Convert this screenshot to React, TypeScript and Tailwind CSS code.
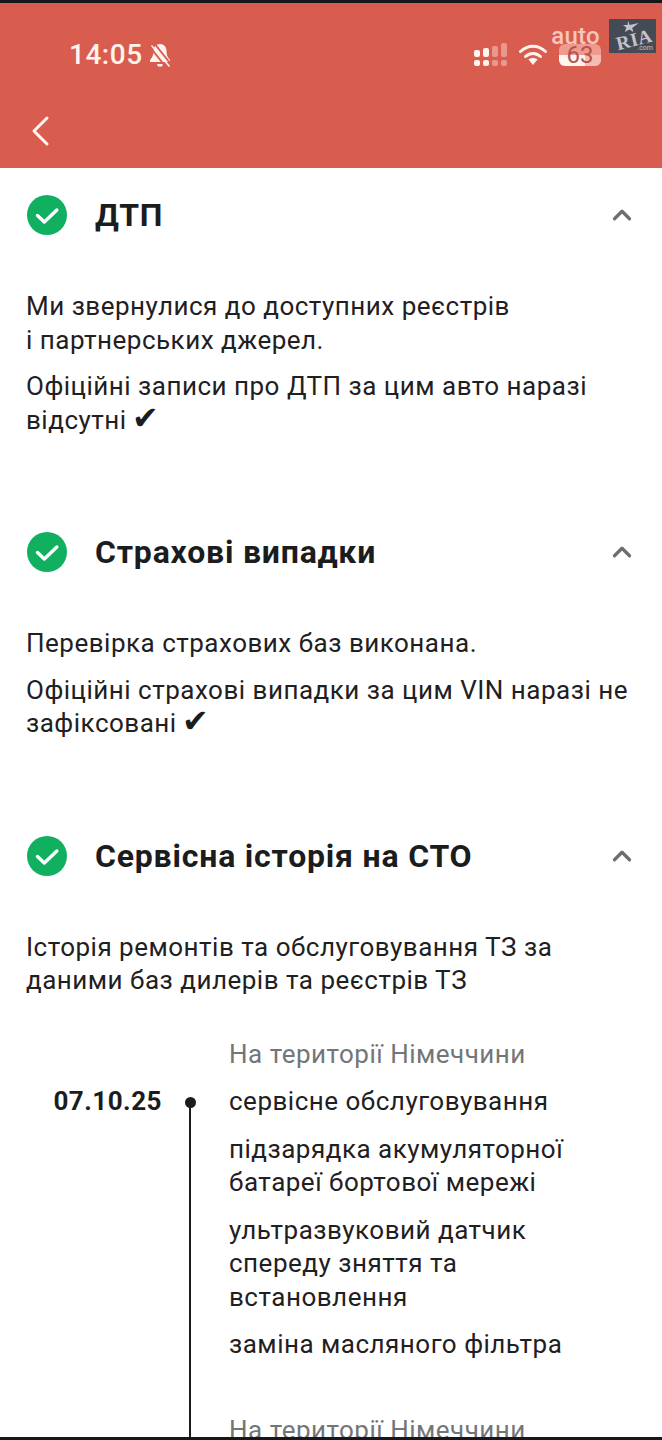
import type { ReactNode } from "react";
import { ChevronUp } from "lucide-react";

function CheckBadge() {
  return (
    <svg width="42" height="42" viewBox="0 0 42 42" className="shrink-0">
      <circle cx="21" cy="21" r="20" fill="#10b060" />
      <path d="M11.5 21.5l6.8 6.5 12.5-12" fill="none" stroke="#fff" strokeWidth="3.4" strokeLinecap="round" strokeLinejoin="round" />
    </svg>
  );
}

function SectionHead({ title }: { title: string }) {
  return (
    <div className="flex h-[42px] items-center">
      <CheckBadge />
      <h2 className="ml-[27px] flex-1 text-[32px] font-bold leading-[42px] tracking-[0.8px] text-[#1b1c1e]">{title}</h2>
      <ChevronUp size={30} strokeWidth={2.6} className="mr-[-1px] text-[#6b6e72]" />
    </div>
  );
}

function StatusBar() {
  return (
    <div className="flex h-[46px] items-center pl-[69px] pr-[61px] pt-[2px]">
      <span className="text-[28px] font-medium leading-none tracking-[0.5px] text-[#fff4ee]">14:05</span>
      <svg width="26" height="26" viewBox="0 0 24 26" className="ml-[4px]">
        <path d="M12 2c-4 0-6.500 3-6.500 7 0 4-1 6-3.500 9v2h20v-2c-2.500-3-3.500-5-3.500-9 0-4-2.500-7-6.500-7z" fill="#fff4ee" />
        <path d="M9 22h6l-1 2.500h-4z" fill="#fff4ee" />
        <path d="M6 1l16 20M2 5l15 19" stroke="#d95d4f" strokeWidth="2" />
        <path d="M3.500 3.500l18 21" stroke="#fff4ee" strokeWidth="1.500" />
      </svg>
      <div className="flex-1" />
      <svg width="34" height="24" viewBox="0 0 34 24">
        <g fill="#fff4ee">
          <rect x="0" y="7" width="6" height="7" rx="2" />
          <rect x="9" y="5" width="6" height="9" rx="2" />
          <rect x="0" y="17" width="6" height="6" rx="2" />
          <rect x="9" y="17" width="6" height="6" rx="2" />
        </g>
        <g fill="#fff4ee" opacity="0.4">
          <rect x="18" y="3" width="6" height="11" rx="2" />
          <rect x="27" y="0" width="6" height="14" rx="2" />
          <rect x="18" y="17" width="6" height="6" rx="2" />
          <rect x="27" y="17" width="6" height="6" rx="2" />
        </g>
      </svg>
      <svg width="28" height="22" viewBox="0 0 28 22" className="ml-[11px]">
        <path d="M1.500 7.500C9 0.500 19 0.500 26.500 7.500" fill="none" stroke="#fff4ee" strokeWidth="3" strokeLinecap="round" />
        <path d="M6.500 12.500c4.500-4 10.500-4 15 0" fill="none" stroke="#fff4ee" strokeWidth="3" strokeLinecap="round" />
        <path d="M9.500 15.500c2.500-2 6.500-2 9 0L14 21z" fill="#fff4ee" />
      </svg>
      <div className="relative ml-[12px] grid h-[22px] w-[42px] grid-rows-2 overflow-hidden rounded-[6px] bg-[#ef9a8e]">
        <div />
        <div className="flex">
          <div className="w-[26px] bg-[#fff4ee]" />
          <div className="flex-1 bg-[#f6bcb1]" />
        </div>
        <span className="absolute inset-0 text-center text-[24px] leading-[22px] text-[#b4534b]">63</span>
      </div>
    </div>
  );
}

function Watermark() {
  return (
    <div className="absolute right-[6px] top-[16px] flex items-start">
      <span className="mr-[9px] mt-[5px] text-[24px] font-medium leading-none tracking-[0.3px] text-[#f8c5ba]">auto</span>
      <div className="relative h-[34px] w-[47px] bg-[#454a57]">
        <svg width="47" height="34" viewBox="0 0 47 34" className="absolute inset-0">
          <path d="M19 2l1.700 4 9-2-6.500 5 1.200 4-4-2.500-4.500 2.500 1.500-4.500-3.500-2.500h4.700z" fill="#c2c3c9" />
        </svg>
        <span className="absolute left-[7px] top-[11px] rotate-[-14deg] font-['Liberation_Serif',serif] text-[19px] font-bold leading-none tracking-[0.5px] text-[#c2c3c9]">RIA</span>
        <span className="absolute bottom-[1px] right-[3px] text-[7px] leading-none text-[#c2c3c9]">.com</span>
      </div>
    </div>
  );
}

function Para({ children }: { children: ReactNode }) {
  return <p className="text-[26px] leading-[33.500px] tracking-[0.5px] text-[#1f2022]">{children}</p>;
}

function Tick() {
  return <span className="ml-[-2px] inline-block h-[24px] text-[32px] leading-[24px] text-[#1b1c1e]">✔</span>;
}

export default function App() {
  return (
    <div className="relative h-[1440px] w-[662px] overflow-hidden border-y-[3px] border-[#16171a] bg-white font-['Roboto',sans-serif]">
      <header className="h-[165px] bg-[#d95d4f] pt-[28px]">
        <StatusBar />
        <svg width="22" height="32" viewBox="0 0 22 32" className="ml-[29px] mt-[38px]">
          <path d="M18 3L5 16l13 13" fill="none" stroke="#fff4ee" strokeWidth="3" strokeLinecap="round" strokeLinejoin="round" />
        </svg>
      </header>
      <Watermark />

      <main className="px-[26px] pt-[26px]">
        <section>
          <SectionHead title="ДТП" />
          <div className="mt-[54px] flex flex-col gap-[13px]">
            <Para>
              Ми звернулися до доступних реєстрів
              <br />і партнерських джерел.
            </Para>
            <Para>
              Офіційні записи про ДТП за цим авто наразі відсутні <Tick />
            </Para>
          </div>
        </section>

        <section className="mt-[94px]">
          <SectionHead title="Страхові випадки" />
          <div className="mt-[54px] flex flex-col gap-[13px]">
            <Para>Перевірка страхових баз виконана.</Para>
            <Para>
              Офіційні страхові випадки за цим VIN наразі не зафіксовані <Tick />
            </Para>
          </div>
        </section>

        <section className="mt-[94px]">
          <SectionHead title="Сервісна історія на СТО" />
          <div className="mt-[54px]">
            <Para>
              Історія ремонтів та обслуговування ТЗ за
              <br />
              даними баз дилерів та реєстрів ТЗ
            </Para>
          </div>

          <div className="mt-[40px] flex">
            <div className="w-[136px] pl-[27px] pt-[47px] text-right text-[26px] font-bold leading-[33px] tracking-[0.5px] text-[#1b1c1e]">07.10.25</div>
            <div className="relative ml-[23px] w-[12px]">
              <div className="absolute left-[4px] top-[60px] h-[400px] w-[2px] bg-[#1b1c1e]" />
              <div className="absolute left-0 top-[59px] h-[11px] w-[11px] rounded-full bg-[#1b1c1e]" />
            </div>
            <div className="ml-[32px] flex flex-1 flex-col gap-[14px]">
              <p className="text-[26px] leading-[33.500px] tracking-[0.5px] text-[#737578]">На території Німеччини</p>
              <Para>сервісне обслуговування</Para>
              <Para>
                підзарядка акумуляторної
                <br />
                батареї бортової мережі
              </Para>
              <Para>
                ультразвуковий датчик
                <br />
                спереду зняття та
                <br />
                встановлення
              </Para>
              <Para>заміна масляного фільтра</Para>
              <p className="mt-[38px] text-[26px] leading-[33.500px] tracking-[0.5px] text-[#737578]">На території Німеччини</p>
            </div>
          </div>
        </section>
      </main>
    </div>
  );
}
